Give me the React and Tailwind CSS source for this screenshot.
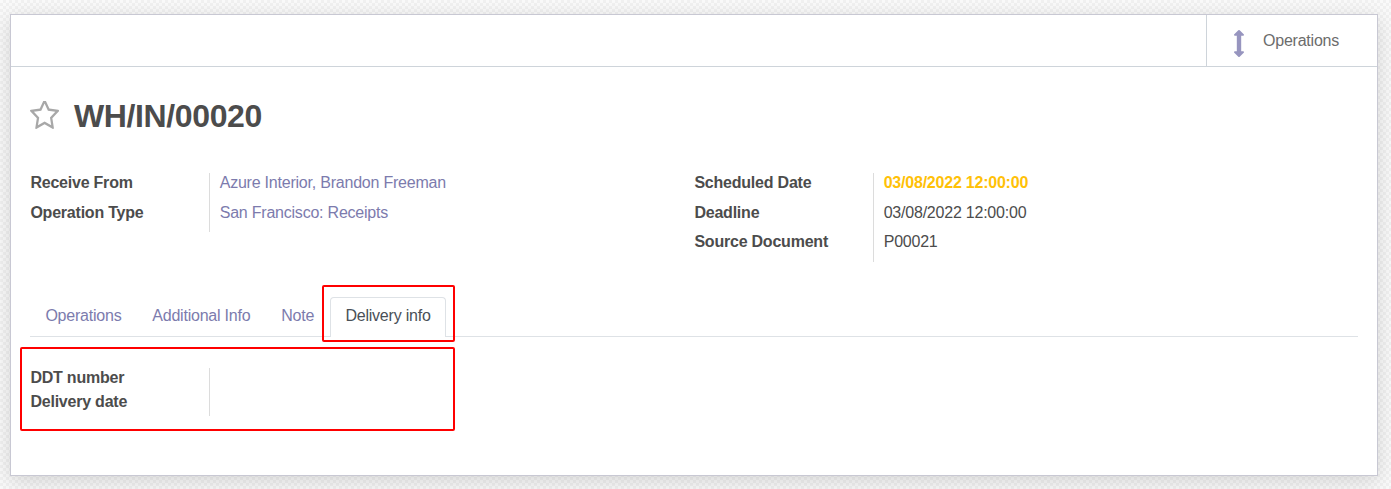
const BASE = "h-[29.5px] leading-[20px] whitespace-nowrap";

function Group({ rows }) {
  return (
    <div className="flex">
      <div className="w-[179px] pl-[0.4px] font-bold">
        {rows.map((r) => (
          <div key={r.label} className={BASE}>{r.label}</div>
        ))}
      </div>
      <div className="border-l border-[#dcdcdc] pl-[9.7px]">
        {rows.map((r) => (
          <div key={r.label} className={BASE}>
            <span className={r.tone}>{r.value}</span>
          </div>
        ))}
      </div>
    </div>
  );
}

function Star() {
  return (
    <svg className="mt-px ml-[0.3px] h-[28px] w-[29.2px] shrink-0" viewBox="0 130 1664 1490" preserveAspectRatio="none" fill="#a8a8a8">
      <path d="M1137 1004l306-297-422-62-189-382-189 382-422 62 306 297-73 421 378-199 377 199zm527-357q0 22-26 48l-363 354 86 500q1 7 1 20 0 50-41 50-19 0-40-12l-449-236-449 236q-22 12-40 12-21 0-31.5-14.5t-10.5-35.5q0-6 2-20l86-500-364-354q-25-27-25-48 0-37 56-46l502-73 225-455q19-41 49-41t49 41l225 455 502 73q56 9 56 46z" />
    </svg>
  );
}

function ArrowsVertical() {
  return (
    <svg className="h-[27px] w-[10px]" viewBox="576 0 640 1792" preserveAspectRatio="none" fill="#9795bf">
      <path d="M1216 320q0 26-19 45t-45 19h-116v1024h116q26 0 45 19t19 45-19 45l-256 256q-19 19-45 19t-45-19l-256-256q-19-19-19-45t19-45 45-19h116v-1024h-116q-26 0-45-19t-19-45 19-45l256-256q19-19 45-19t45 19l256 256q19 19 19 45z" />
    </svg>
  );
}

const source = [
  { label: "Receive From", value: "Azure Interior, Brandon Freeman", tone: "text-[#7c7bad]" },
  { label: "Operation Type", value: "San Francisco: Receipts", tone: "text-[#7c7bad]" },
];

const schedule = [
  { label: "Scheduled Date", value: "03/08/2022 12:00:00", tone: "font-bold text-[#ffc107]" },
  { label: "Deadline", value: "03/08/2022 12:00:00", tone: "" },
  { label: "Source Document", value: "P00021", tone: "" },
];

export default function App() {
  return (
    <div className="h-[489px] overflow-hidden bg-[repeating-conic-gradient(#f1f1f1_0_25%,#fafafa_0_50%)] bg-[length:6px_6px] pt-[14px] pr-[13px] pl-[10px] font-['Liberation_Sans',Arial,sans-serif] text-[16px] tracking-[-0.22px] text-[#4c4c4c]">
      <main className="relative h-[462px] border border-[#c8c8d3] bg-white shadow-[0_5px_20px_0_rgba(0,0,0,0.15)]">
        <header className="flex h-[52px] justify-end border-b border-[#ced4da]">
          <button className="flex w-[171px] items-start border-l border-[#ced4da] pt-[15px] pl-[26.5px] text-[#6c6c6c]">
            <ArrowsVertical />
            <span className="mt-px ml-[19.5px] leading-[20px] tracking-[-0.22px]">Operations</span>
          </button>
        </header>

        <div className="pr-[19px] pl-[19px]">
          <h1 className="flex h-[106px] items-start pt-[33px] text-[32px] leading-[32px] font-bold tracking-[-0.38px]">
            <Star />
            <span className="ml-[14.5px]">WH/IN/00020</span>
          </h1>

          <section className="grid h-[124px] grid-cols-2 items-start">
            <Group rows={source} />
            <Group rows={schedule} />
          </section>

          <nav className="flex h-[40px] gap-[0.8px] border-b border-[#dee2e6] pl-[0.4px] leading-[37px] text-[#7c7bad]">
            <a className="px-[15px]">Operations</a>
            <a className="px-[15px]">Additional Info</a>
            <a className="px-[15px]">Note</a>
            <a className="h-[40px] w-[116px] rounded-t-[4px] border border-b-0 border-[#dee2e6] bg-white pl-[14.5px] leading-[36px] whitespace-nowrap text-[#495057]">Delivery info</a>
          </nav>

          <section className="mt-[31px] flex leading-[24px] font-bold">
            <div className="-mt-[2px] w-[179px] pl-[0.4px]">
              <div>DDT number</div>
              <div>Delivery date</div>
            </div>
            <div className="h-[48px] border-l border-[#dcdcdc]" />
          </section>
        </div>

        <div className="absolute top-[270px] left-[311px] h-[57px] w-[133px] rounded-[2px] border-2 border-[#f00]" />
        <div className="absolute top-[332px] left-[9px] h-[84px] w-[435px] rounded-[2px] border-2 border-[#f00]" />
      </main>
    </div>
  );
}
